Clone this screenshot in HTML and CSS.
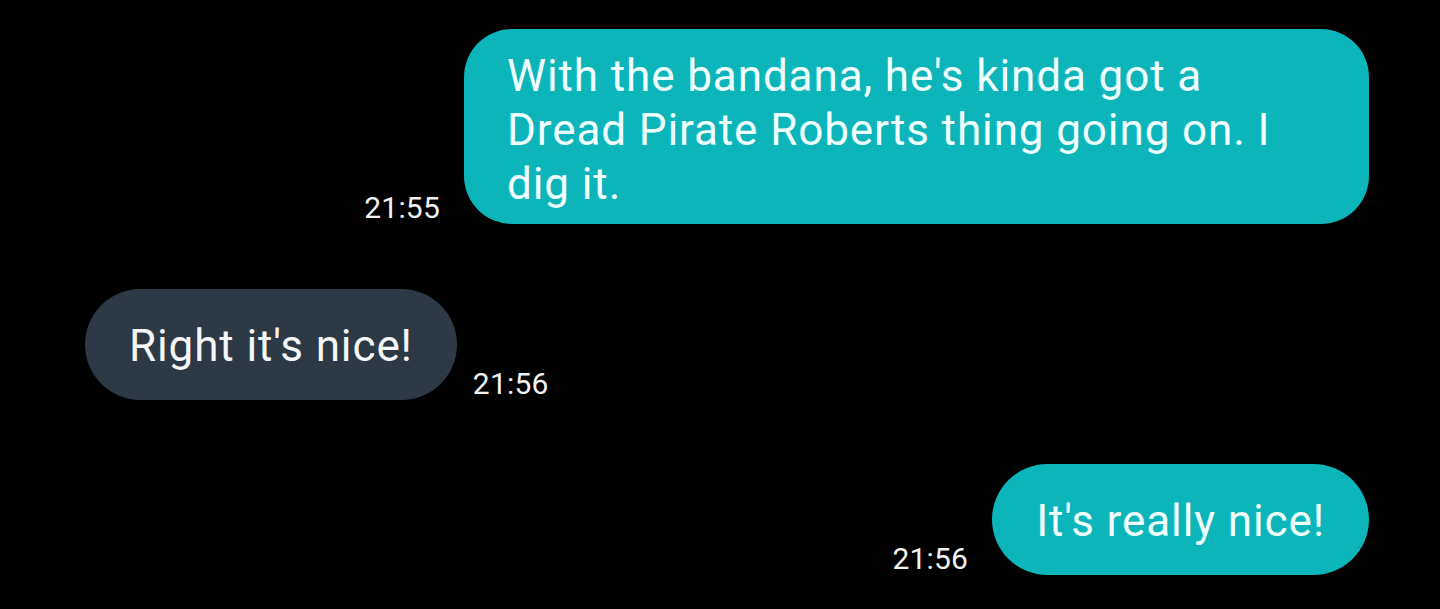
FILE: index.html
```html
<!DOCTYPE html>
<html lang="en">
<head>
<meta charset="utf-8">
<title>Chat</title>
<link rel="stylesheet" href="styles.css">
</head>
<body>
<main class="chat">
  <div class="row row-out row-first">
    <span class="time time-out">21:55</span>
    <div class="bubble bubble-out bubble-multi">With the bandana, he's kinda got a<br>Dread Pirate Roberts thing going on. I<br>dig it.</div>
  </div>
  <div class="row row-in">
    <div class="bubble bubble-in bubble-single">Right it's nice!</div>
    <span class="time time-in">21:56</span>
  </div>
  <div class="row row-out">
    <span class="time time-out">21:56</span>
    <div class="bubble bubble-out bubble-single">It's really nice!</div>
  </div>
</main>
</body>
</html>
```

FILE: styles.css
```css
html, body {
  margin: 0;
  padding: 0;
  background: #000;
}

body {
  width: 1440px;
  height: 609px;
  overflow: hidden;
  font-family: Roboto, "Liberation Sans", sans-serif;
  color: #f2fdfd;
}

.chat {
  display: flex;
  flex-direction: column;
  gap: 64px;
  padding: 29px 71px 0 85px;
}

.row {
  display: flex;
  align-items: flex-end;
}

.row-out {
  justify-content: flex-end;
  gap: 24px;
}

.row-in {
  justify-content: flex-start;
  gap: 16px;
}

.row-first {
  margin-bottom: 1px;
}

.bubble {
  font-size: 44px;
  line-height: 54px;
  letter-spacing: 0.9px;
  box-sizing: border-box;
}

.bubble-out {
  background: #0cb5ba;
  color: #f0ffff;
}

.bubble-in {
  background: #2d3a46;
  color: #f4f6f8;
}

.bubble-multi {
  width: 905px;
  height: 195px;
  padding: 20px 44px 13px 43px;
  border-radius: 48px;
}

.bubble-single {
  height: 111px;
  padding: 30px 44px 27px 44px;
  border-radius: 56px;
  white-space: nowrap;
}

.time {
  font-size: 30px;
  line-height: 31px;
  letter-spacing: 0.2px;
  color: #f2f2f2;
  padding-bottom: 1px;
}
```
